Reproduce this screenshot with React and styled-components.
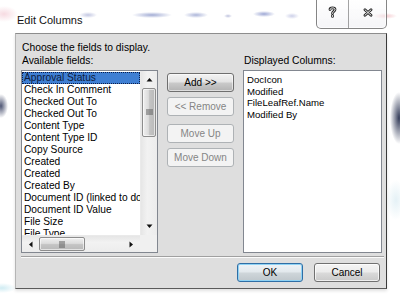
import React from 'react';
import styled, { createGlobalStyle } from 'styled-components';

const Global = createGlobalStyle`
  html, body { margin: 0; padding: 0; background: #fff; }
  body { font-family: "Liberation Sans", Arial, sans-serif; font-size: 10px; color: #000; }
`;

const Window = styled.div`
  width: 400px;
  height: 297px;
  overflow: hidden;
  background:
    radial-gradient(ellipse 7px 12px at 1px 106px, rgba(20, 30, 70, 0.75), transparent),
    radial-gradient(ellipse 9px 26px at 399px 118px, rgba(15, 25, 60, 0.85), transparent),
    radial-gradient(ellipse 14px 8px at 4px 14px, rgba(230, 150, 170, 0.35), transparent),
    radial-gradient(ellipse 14px 5px at 2px 288px, rgba(120, 200, 220, 0.35), transparent),
    radial-gradient(ellipse 10px 20px at 396px 200px, rgba(150, 200, 220, 0.25), transparent),
    #fff;
`;

const TitleBar = styled.div`
  height: 33px;
  display: flex;
  align-items: flex-start;
  padding: 0 13px 0 17px;
  box-sizing: border-box;
  background:
    radial-gradient(ellipse 9px 3px at 88px 15px, rgba(120, 130, 190, 0.45), transparent),
    radial-gradient(ellipse 20px 3px at 152px 15px, rgba(70, 90, 170, 0.5), transparent),
    radial-gradient(ellipse 12px 3px at 196px 15px, rgba(70, 90, 170, 0.45), transparent),
    radial-gradient(ellipse 4px 2px at 228px 16px, rgba(90, 100, 170, 0.4), transparent),
    radial-gradient(ellipse 11px 3px at 264px 14px, rgba(60, 80, 170, 0.5), transparent),
    radial-gradient(ellipse 7px 3px at 292px 16px, rgba(110, 120, 190, 0.35), transparent),
    radial-gradient(ellipse 5px 2px at 76px 37px, rgba(130, 140, 190, 0.35), transparent),
    radial-gradient(ellipse 5px 3px at 97px 36px, rgba(60, 80, 170, 0.45), transparent),
    radial-gradient(ellipse 12px 3px at 385px 16px, rgba(230, 130, 140, 0.45), transparent),
    transparent;
`;

const Title = styled.div`
  font-size: 11px;
  line-height: 14px;
  margin-top: 13px;
  color: #111;
`;

const Caption = styled.div`
  margin-left: auto;
  display: flex;
  height: 28px;
  border: 1px solid rgba(70, 70, 70, 0.65);
  border-top: none;
  border-radius: 0 0 5px 5px;
  background: linear-gradient(rgba(255, 255, 255, 0.6), rgba(235, 235, 240, 0.5));
  box-shadow: inset 0 0 0 1px rgba(255, 255, 255, 0.7);
`;

const CaptionBtn = styled.div`
  width: ${p => p.$w}px;
  display: flex;
  align-items: center;
  justify-content: center;
  padding-bottom: 4px;
  box-sizing: border-box;
  & + & { border-left: 1px solid rgba(90, 90, 90, 0.55); }
`;

const Panel = styled.div`
  margin-left: 15px;
  width: 372px;
  box-sizing: border-box;
  background: #dedede;
  border-top: 1px solid #8d8d8d;
  border-right: 1px solid #3a3a3a;
  border-bottom: 1px solid #5a5a5a;
  border-left: 1px solid #b5b5b5;
  padding: 7px 0 6px 5px;
  display: flex;
  flex-direction: column;
  box-shadow: 0 2px 3px rgba(0, 0, 0, 0.12);
`;

const Label = styled.div`
  font-size: 10.3px;
  line-height: 13px;
  padding-left: 1px;
  white-space: nowrap;
`;

const Columns = styled.div`
  display: grid;
  grid-template-columns: 137px 67px 139px;
  grid-template-rows: 13px 183px;
  column-gap: 9px;
  row-gap: 3px;
`;

const ButtonStack = styled.div`
  grid-column: 2;
  grid-row: 2;
  display: flex;
  flex-direction: column;
  padding-top: 3px;
`;

const Btn = styled.div`
  height: 19px;
  box-sizing: border-box;
  margin-top: ${p => p.$mt || 0}px;
  width: ${p => p.$w || 67}px;
  display: flex;
  align-items: center;
  justify-content: center;
  border-radius: 3px;
  white-space: nowrap;
  font-size: 10px;
  ${p => p.$kind === 'disabled' && `
    border: 1px solid #aeb2b5;
    background: #f3f3f3;
    color: #858585;
  `}
  ${p => p.$kind === 'hot' && `
    border: 1px solid #6f6f6f;
    background: linear-gradient(#f3f3f3 0%, #e4e4e4 45%, #c9c9c9 55%, #b3b3b3 100%);
    box-shadow: inset 0 0 0 1px rgba(255,255,255,0.55);
    color: #000;
  `}
  ${p => p.$kind === 'normal' && `
    border: 1px solid #707070;
    background: linear-gradient(#f4f4f4 0%, #ebebeb 48%, #dadada 52%, #c9c9c9 100%);
    box-shadow: inset 0 0 0 1px rgba(255,255,255,0.7);
    color: #000;
  `}
  ${p => p.$kind === 'default' && `
    border: 1px solid #2f6ea5;
    background: linear-gradient(#eef3f7 0%, #e2e8ec 48%, #cfd6da 52%, #bfc7cc 100%);
    box-shadow: inset 0 0 0 1px #8fd2f4;
    color: #000;
  `}
`;

const ListBox = styled.div`
  grid-row: 2;
  grid-column: ${p => p.$col};
  box-sizing: border-box;
  border: 1px solid #828790;
  background: #fff;
  display: grid;
  grid-template-columns: ${p => (p.$scroll ? '1fr 17px' : '1fr')};
  grid-template-rows: ${p => (p.$scroll ? '1fr 17px' : '1fr')};
  overflow: hidden;
`;

const Items = styled.div`
  overflow: hidden;
  padding: ${p => p.$pad};
  font-size: ${p => p.$fs}px;
`;

const Item = styled.div`
  height: ${p => p.$h || 12}px;
  line-height: ${p => p.$h || 12}px;
  padding-left: 2px;
  white-space: nowrap;
  overflow: hidden;
  color: #000;
  ${p => p.$sel && `
    background: #3f7fd3;
    outline: 1px dotted #0b1e4a;
    outline-offset: -1px;
    color: #0d1b3c;
  `}
`;

const VBar = styled.div`
  display: flex;
  flex-direction: column;
  background: linear-gradient(90deg, #e6e6e6, #f2f2f2 40%, #ececec);
  border-left: 1px solid #eaeaea;
`;

const HBar = styled.div`
  display: flex;
  background: linear-gradient(#e6e6e6, #f2f2f2 40%, #ececec);
  border-top: 1px solid #eaeaea;
`;

const Arrow = styled.div`
  flex: 0 0 17px;
  width: 17px;
  height: 17px;
  display: flex;
  align-items: center;
  justify-content: center;
`;

const Track = styled.div`
  flex: 1;
  display: flex;
  flex-direction: ${p => (p.$vertical ? 'column' : 'row')};
`;

const Thumb = styled.div`
  box-sizing: border-box;
  border: 1px solid #8d8d8d;
  border-radius: 2px;
  display: flex;
  align-items: center;
  justify-content: center;
  ${p => p.$vertical ? `
    height: 49px;
    margin: 0 1px;
    background: linear-gradient(90deg, #f0f0f0 0%, #dcdcdc 45%, #c4c4c4 55%, #b9b9b9 100%);
  ` : `
    width: 46px;
    margin: 1px 0;
    background: linear-gradient(#f0f0f0 0%, #dcdcdc 45%, #c4c4c4 55%, #b9b9b9 100%);
  `}
  box-shadow: inset 0 0 0 1px rgba(255,255,255,0.6);
`;

const Corner = styled.div`
  background: #f0f0f0;
`;

const Separator = styled.div`
  margin: 3px 2px 0 0;
  height: 2px;
  border-top: 1px solid #a0a0a0;
  border-bottom: 1px solid #fbfbfb;
  box-sizing: border-box;
`;

const Footer = styled.div`
  display: flex;
  justify-content: flex-end;
  gap: 11px;
  padding-right: 6px;
  margin-top: 5px;
`;

const Tri = ({ dir }) => {
  const pts = {
    up: '0.5,4.5 3.5,1 6.5,4.5',
    down: '0.5,0.5 3.5,4 6.5,0.5',
    left: '4.5,0.5 1,3.5 4.5,6.5',
    right: '0.5,0.5 4,3.5 0.5,6.5',
  }[dir];
  const vertical = dir === 'up' || dir === 'down';
  return (
    <svg width={vertical ? 7 : 5} height={vertical ? 5 : 7} viewBox={vertical ? '0 0 7 5' : '0 0 5 7'}>
      <polygon points={pts} fill="#111" />
    </svg>
  );
};

const Grip = ({ vertical }) => (
  <svg width="7" height="7" viewBox="0 0 7 7">
    {[1, 3, 5].map(v =>
      vertical ? (
        <line key={v} x1="0" y1={v} x2="7" y2={v} stroke="#5d5d5d" strokeWidth="1" />
      ) : (
        <line key={v} x1={v} y1="0" x2={v} y2="7" stroke="#5d5d5d" strokeWidth="1" />
      )
    )}
  </svg>
);

const HelpGlyph = () => (
  <svg width="9" height="12" viewBox="0 0 9 12">
    <path d="M2 3.5 C2 1.3 7 1.3 7 3.5 C7 5.2 4.5 5.4 4.5 7.3 M4.5 9.6 L4.5 10.4" fill="none" stroke="#2a2a2a" strokeWidth="2.8" strokeLinecap="round" />
    <path d="M2 3.5 C2 1.3 7 1.3 7 3.5 C7 5.2 4.5 5.4 4.5 7.3 M4.5 9.6 L4.5 10.4" fill="none" stroke="#f4f4f4" strokeWidth="1" strokeLinecap="round" />
  </svg>
);

const CloseGlyph = () => (
  <svg width="10" height="9" viewBox="0 0 10 9">
    <path d="M2 1.8 L8 7.2 M8 1.8 L2 7.2" fill="none" stroke="#2a2a2a" strokeWidth="2.8" strokeLinecap="round" />
    <path d="M2 1.8 L8 7.2 M8 1.8 L2 7.2" fill="none" stroke="#f4f4f4" strokeWidth="1" strokeLinecap="round" />
  </svg>
);

const available = [
  'Approval Status',
  'Check In Comment',
  'Checked Out To',
  'Checked Out To',
  'Content Type',
  'Content Type ID',
  'Copy Source',
  'Created',
  'Created',
  'Created By',
  'Document ID (linked to document)',
  'Document ID Value',
  'File Size',
  'File Type',
  'Folder Child Count',
];

const displayed = ['DocIcon', 'Modified', 'FileLeafRef.Name', 'Modified By'];

export default function App() {
  return (
    <Window>
      <Global />
      <TitleBar>
        <Title>Edit Columns</Title>
        <Caption>
          <CaptionBtn $w={31}><HelpGlyph /></CaptionBtn>
          <CaptionBtn $w={38}><CloseGlyph /></CaptionBtn>
        </Caption>
      </TitleBar>
      <Panel>
        <Label>Choose the fields to display.</Label>
        <Columns>
          <Label>Available fields:</Label>
          <div />
          <Label>Displayed Columns:</Label>
          <ListBox $col={1} $scroll>
            <Items $pad="1px 0 0 0" $fs={10.2}>
              {available.map((f, i) => (
                <Item key={i} $sel={i === 0}>{f}</Item>
              ))}
            </Items>
            <VBar>
              <Arrow><Tri dir="up" /></Arrow>
              <Track $vertical>
                <Thumb $vertical><Grip vertical /></Thumb>
              </Track>
              <Arrow><Tri dir="down" /></Arrow>
            </VBar>
            <HBar>
              <Arrow><Tri dir="left" /></Arrow>
              <Track>
                <Thumb><Grip /></Thumb>
              </Track>
              <Arrow><Tri dir="right" /></Arrow>
            </HBar>
            <Corner />
          </ListBox>
          <ButtonStack>
            <Btn $kind="hot">Add &gt;&gt;</Btn>
            <Btn $kind="disabled" $mt={5}>&lt;&lt; Remove</Btn>
            <Btn $kind="disabled" $mt={8}>Move Up</Btn>
            <Btn $kind="disabled" $mt={5}>Move Down</Btn>
          </ButtonStack>
          <ListBox $col={3}>
            <Items $pad="3px 0 0 1px" $fs={9.6}>
              {displayed.map(f => (
                <Item key={f} $h={11.7}>{f}</Item>
              ))}
            </Items>
          </ListBox>
        </Columns>
        <Separator />
        <Footer>
          <Btn $kind="default" $w={66}>OK</Btn>
          <Btn $kind="normal" $w={66}>Cancel</Btn>
        </Footer>
      </Panel>
    </Window>
  );
}
